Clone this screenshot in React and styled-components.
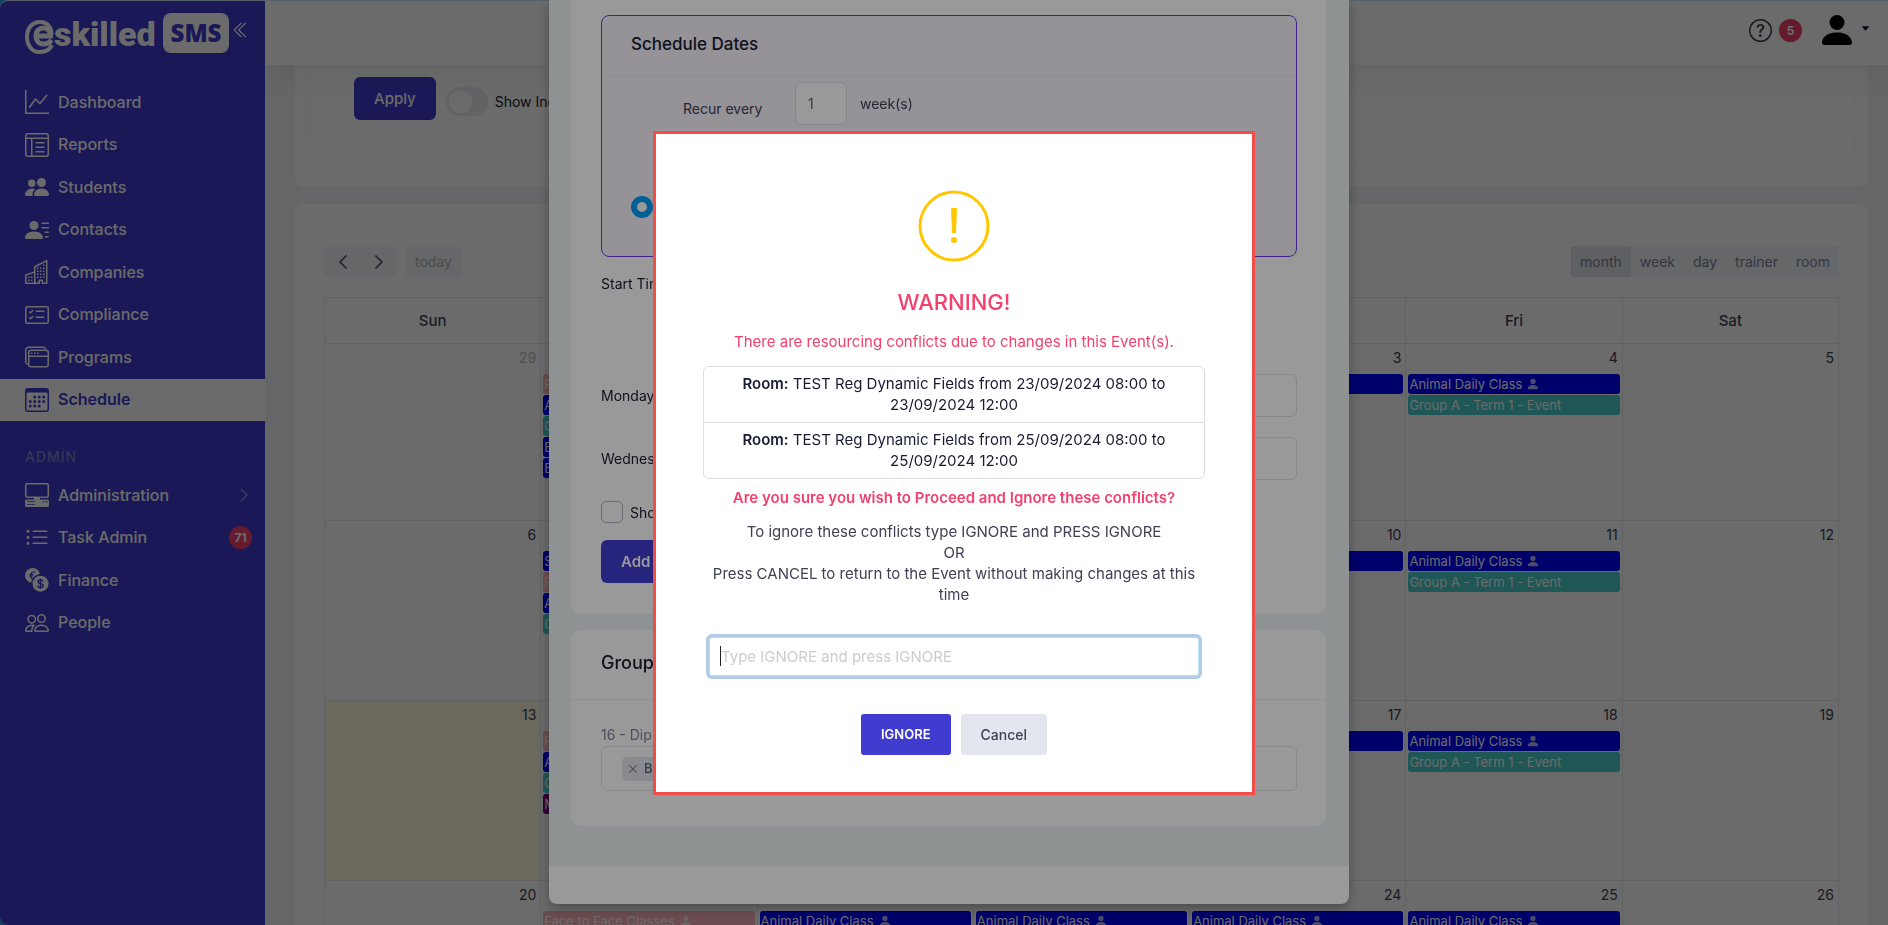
import React from "react";
import styled, { createGlobalStyle, css } from "styled-components";
import {
    BsGraphUp,
    BsPeopleFill,
    BsPersonLinesFill,
    BsCardChecklist,
    BsListUl,
    BsPeople,
    BsPersonFill,
    BsQuestionCircle,
    BsChevronRight,
    BsChevronLeft,
    BsChevronDoubleLeft,
    BsX,
    BsCaretDownFill,
} from "react-icons/bs";

const GlobalStyle = createGlobalStyle`
    * {
        box-sizing: border-box;
    }
    body {
        margin: 0;
        overflow: hidden;
        background: #1ca5e8;
        color: #181c32;
        font-family: Inter, "Open Sans", sans-serif;
        font-size: 14px;
        line-height: 21px;
    }
    button, input {
        font-family: inherit;
    }
    h2, h3, p, ul {
        margin: 0;
        padding: 0;
    }
    ul {
        list-style: none;
    }
`;

/* ---------- page shell ---------- */

const Shell = styled.div`
    display: flex;
    height: 100vh;
    overflow: hidden;
    border-top: 1px solid #cfe6fa;
    border-radius: 8px 0 0 8px;
    background: #f0f4f8;
`;

const Sidebar = styled.aside`
    flex: 0 0 265px;
    padding-top: 12px;
    background: #403ccf;
    color: #fff;
`;

const Brand = styled.div`
    display: flex;
    align-items: flex-start;
    height: 68px;
    padding-left: 25px;
`;

const LogoWord = styled.span`
    display: flex;
    align-items: center;
    width: 138px;
    height: 42px;
    font-family: Roboto, sans-serif;
    font-size: 34px;
    font-weight: 900;
    line-height: 42px;

    svg {
        flex: none;
        align-self: flex-end;
    }
`;

const LogoBadge = styled.span`
    width: 66px;
    height: 40px;
    border-radius: 8px;
    background: #fff;
    color: #403ccf;
    font-family: "Open Sans", sans-serif;
    font-size: 24px;
    font-weight: 800;
    line-height: 40px;
    text-align: center;
`;

const CollapseButton = styled.button`
    margin: 8px 0 0 3px;
    padding: 0;
    border: 0;
    background: none;
    color: #fff;
    font-size: 18px;
    line-height: 18px;

    svg {
        display: block;
    }
`;

const NavList = styled.ul`
    display: grid;
    grid-auto-rows: 1fr;
    min-height: ${({ $rows }) => ($rows * 85) / 2}px;
`;

const NavLink = styled.a`
    display: flex;
    align-items: center;
    gap: 9px;
    height: 100%;
    padding: 0 13px 0 25px;
    color: #fff;
    font-size: 16px;
    font-weight: 500;
    text-decoration: none;

    svg {
        flex: none;
        width: 24px;
        height: 24px;
    }

    ${({ $active }) =>
        $active &&
        css`
            background: #fff;
            color: #403ccf;
            font-weight: 600;
        `}
`;

const NavText = styled.span`
    flex: 1;
`;

const NavHeading = styled.h3`
    padding: 25px 25px 6px;
    color: #8280cf;
    font-size: 14px;
    font-weight: 500;
    line-height: 22px;
    letter-spacing: 1px;
`;

const NavArrow = styled(BsChevronRight)`
    && {
        width: 16px;
        height: 16px;
        opacity: 0.6;
    }
`;

const Badge = styled.span`
    min-width: 23px;
    height: 23px;
    border-radius: 12px;
    background: #f1416c;
    color: #fff;
    font-size: 12px;
    font-weight: 700;
    line-height: 23px;
    text-align: center;
`;

const Main = styled.main`
    flex: 1;
    min-width: 0;
`;

const TopBar = styled.header`
    position: relative;
    display: flex;
    align-items: flex-start;
    justify-content: flex-end;
    height: 64px;
    padding: 14px 18px 0 0;
    background: #fff;
    box-shadow: 0 10px 30px rgba(82, 63, 105, 0.08);

    ${Badge} {
        margin: 4px 20px 0 7px;
    }
`;

const HelpIcon = styled(BsQuestionCircle)`
    width: 23px;
    height: 23px;
    margin-top: 4px;
    color: #3f4254;
`;

const UserIcon = styled(BsPersonFill)`
    width: 40px;
    height: 40px;
    margin: -5px -5px 0;
    color: #000;
`;

const UserCaret = styled(BsCaretDownFill)`
    width: 9px;
    height: 9px;
    margin: 9px 0 0 9px;
`;

const Content = styled.div`
    padding: 0 20px 0 30px;
`;

const FilterCard = styled.section`
    height: 122px;
    margin-bottom: 17px;
    padding: 0 16px 24px;
    border-radius: 0 0 8px 8px;
    background: #fff;
`;

const FilterInner = styled.div`
    display: flex;
    align-items: flex-start;
    height: 98px;
    padding: 12px 43px 0;
    border-radius: 0 0 8px 8px;
    box-shadow: 0 0 20px rgba(76, 87, 125, 0.02);
`;

const PrimaryButton = styled.button`
    height: 43px;
    padding: 0 20px;
    border: 0;
    border-radius: 6px;
    background: #403ccf;
    color: #fff;
    font-size: 15px;
    font-weight: ${({ $strong }) => ($strong ? 600 : 500)};
`;

const Switch = styled.input`
    appearance: none;
    width: 42px;
    height: 29px;
    margin: 10px 7px 0 10px;
    border-radius: 15px;
    background: #e9edf2;

    &::before {
        content: "";
        display: block;
        width: 23px;
        height: 23px;
        margin: 3px;
        border-radius: 50%;
        background: #fff;
    }
`;

const SwitchLabel = styled.label`
    margin-top: 14px;
`;

/* ---------- calendar ---------- */

const CalendarCard = styled.section`
    padding: 42px 29px 30px;
    border-radius: 8px;
    background: #fff;
`;

const CalendarToolbar = styled.div`
    display: flex;
    gap: 10px;
    margin-bottom: 20px;
`;

const ButtonGroup = styled.div`
    display: flex;
    border-radius: 4px;
    overflow: hidden;
    background: #f0f3fa;

    &:last-child {
        margin-left: auto;
    }
`;

const ToolButton = styled.button`
    height: 31px;
    padding: 0 9px;
    border: 0;
    background: ${({ $active }) => ($active ? "#e4e7ee" : "#f3f6fa")};
    color: #7e8299;
    font-size: 14px;

    &:disabled {
        color: #b5b5c3;
    }

    svg {
        display: block;
        width: 16px;
        height: 16px;
        margin: 0 2px;
        stroke-width: 1;
        color: #5e6278;
    }
`;

const ArrowButton = styled(ToolButton)`
    width: 36px;
`;

const CalendarTable = styled.table`
    width: 100%;
    table-layout: fixed;
    border-collapse: collapse;

    th,
    td {
        padding: 0;
        border: 1px solid #e8eaf0;
    }

    th {
        height: 46px;
        color: #3f4254;
        font-size: 15px;
        font-weight: 500;
    }

    td {
        height: 180px;
        vertical-align: top;
    }

    tbody tr:first-child td {
        height: 177px;
    }
`;

const DayCell = styled.td`
    background: ${({ $today }) => ($today ? "#fffadf" : "transparent")};
`;

const DayNumber = styled.div`
    height: 30px;
    padding: 3px 4px 0;
    color: #3f4254;
    text-align: right;
    opacity: ${({ $muted }) => ($muted ? 0.35 : 1)};
`;

const eventColors = {
    blue: "#0000ff",
    teal: "#48d1cc",
    pink: "#ffb6c1",
    purple: "#800080",
};

const EventChip = styled.div`
    display: flex;
    align-items: center;
    gap: 4px;
    height: 20px;
    margin: 0 2px 1px;
    padding: 0 1px;
    border-radius: 3px;
    background: ${({ $color }) => eventColors[$color]};
    color: #fff;
    font-size: 13px;
    line-height: 20px;
    white-space: nowrap;

    svg {
        width: 14px;
        height: 14px;
        opacity: 0.7;
    }
`;

/* ---------- event modal ---------- */

const Overlay = styled.div`
    position: fixed;
    inset: 0;
    display: flex;
    justify-content: center;
    align-items: ${({ $center }) => ($center ? "center" : "flex-start")};
    padding-left: ${({ $center }) => ($center ? 20 : 10)}px;
    background: rgba(0, 0, 0, ${({ $dim }) => $dim});
`;

const EventModal = styled.div`
    width: 800px;
    border-radius: 0 0 8px 8px;
    background: #fff;
    box-shadow: 0 4px 12px rgba(0, 0, 0, 0.3);
    overflow: hidden;
`;

const ModalBody = styled.div`
    padding: 0 23px 40px 22px;
    background: #eef3f5;
`;

const ModalFooter = styled.div`
    height: 38px;
`;

const ModalCard = styled.section`
    margin-bottom: 16px;
    padding: 15px 29px 31px 30px;
    border-radius: 0 0 10px 10px;
    background: #fff;

    & + & {
        margin-bottom: 0;
        padding: 0 0 35px;
        border-radius: 10px;
    }
`;

const ScheduleBox = styled.div`
    height: 242px;
    margin-bottom: 16px;
    border: 1px solid #7239ea;
    border-radius: 8px;
    background: #f8f3fd;
`;

const BoxTitle = styled.h3`
    height: 60px;
    padding: 0 29px;
    border-bottom: 1px solid #f1edf7;
    font-size: 17px;
    font-weight: 500;
    line-height: 57px;
`;

const RecurRow = styled.div`
    display: flex;
    align-items: center;
    padding: 6px 0 0 81px;
    color: #3f4254;
`;

const RecurLabel = styled.label`
    width: 112px;
    padding-top: 10px;
`;

const TextField = styled.input`
    width: ${({ $narrow }) => ($narrow ? "52px" : "100%")};
    height: 43px;
    padding: 0 12px;
    border: 1px solid #e1e3ea;
    border-radius: 6px;
    background: #fff;
    color: #5e6278;
    font-size: 14px;
`;

const WeekText = styled.span`
    padding-left: 13px;
`;

const RadioLabel = styled.label`
    display: flex;
    align-items: center;
    gap: 10px;
    padding: 71px 29px 0;
`;

const RadioInput = styled.input`
    appearance: none;
    width: 22px;
    height: 22px;
    margin: 0;
    border: 6px solid #009ef7;
    border-radius: 50%;
    background: #fff;
`;

const FieldCaption = styled.p`
    margin-bottom: 80px;
`;

const DayRow = styled.div`
    display: grid;
    grid-template-columns: 110px 1fr;
    align-items: center;
    margin-bottom: 20px;
`;

const CheckLabel = styled.label`
    display: flex;
    align-items: center;
    gap: 7px;
    margin: 21px 0 17px;
`;

const CheckInput = styled.input`
    appearance: none;
    width: 22px;
    height: 22px;
    margin: 0;
    border: 1px solid #b5b5c3;
    border-radius: 5px;
`;

const CardHeading = styled.h3`
    height: 70px;
    padding: 0 30px;
    border-bottom: 1px solid #eff2f5;
    font-size: 18px;
    font-weight: 500;
    line-height: 66px;
`;

const GroupBody = styled.div`
    padding: 24px 29px 0 30px;
    color: #7e8299;
`;

const TagBox = styled.div`
    display: flex;
    align-items: center;
    height: 45px;
    margin-top: 1px;
    padding: 0 20px;
    border: 1px solid #e1e3ea;
    border-radius: 6px;
`;

const Tag = styled.span`
    display: flex;
    align-items: center;
    gap: 2px;
    height: 24px;
    padding: 0 8px 0 2px;
    border-radius: 5px;
    background: #e4e6ef;
    color: #5e6278;
    font-size: 13px;
    font-weight: 500;

    svg {
        opacity: 0.7;
    }
`;

/* ---------- warning dialog ---------- */

const WarningDialog = styled.div`
    width: 602px;
    padding: 56px 47px 37px;
    border: 3px solid #f04e47;
    background: #fff;
    font-size: 15px;
    text-align: center;
`;

const WarningIcon = styled.svg`
    display: block;
    width: 72px;
    height: 72px;
    margin: 0 auto 24px;
`;

const WarningTitle = styled.h2`
    color: #f1416c;
    font-size: 22px;
    font-weight: 500;
    line-height: 32px;
`;

const WarningText = styled.p`
    padding: 13px 0 14px;
    color: #f1416c;
`;

const ConflictList = styled.ul`
    border: 1px solid #dcdde0;
    border-radius: 6px;
`;

const ConflictItem = styled.li`
    padding: 6px 30px 7px;

    & + & {
        border-top: 1px solid #dcdde0;
    }

    b {
        font-weight: 600;
    }
`;

const ConfirmText = styled.p`
    padding: 8px 0 13px;
    color: #f1416c;
    font-weight: 600;
`;

const HelpText = styled.p`
    color: #3f4254;
`;

const IgnoreField = styled.div`
    position: relative;
    margin: 32px 6px 38px;
`;

const IgnoreInput = styled.input`
    display: block;
    width: 100%;
    height: 39px;
    padding: 0 11px;
    border: 1px solid #b8dff0;
    border-radius: 3px;
    outline: 0;
    box-shadow: 0 0 0 3px #b1cce4;
    caret-color: transparent;
    font-size: 15px;

    &::placeholder {
        color: #ccc;
    }
`;

const Caret = styled.span`
    position: absolute;
    top: 9px;
    left: 11px;
    width: 1px;
    height: 20px;
    background: #222;
`;

const DialogActions = styled.div`
    display: flex;
    justify-content: center;
    gap: 10px;
`;

const DialogButton = styled.button`
    height: 41px;
    padding: 0 20px;
    border: 0;
    border-radius: 3px;
    background: ${({ $primary }) => ($primary ? "#403ccf" : "#e4e6ef")};
    color: ${({ $primary }) => ($primary ? "#fff" : "#3f4254")};
    font-size: ${({ $primary }) => ($primary ? 13 : 14)}px;
    font-weight: ${({ $primary }) => ($primary ? 600 : 500)};
`;

/* ---------- icons ---------- */

const ReportsIcon = () => (
    <svg viewBox='0 0 16 16' fill='none' stroke='currentColor'>
        <rect x='0.5' y='0.5' width='15' height='15' rx='1.5' />
        <path d='M0.5 3.5h15M4.5 3.5v12M7 6.5h6M7 9.5h6M7 12.5h6' />
    </svg>
);

const CompaniesIcon = () => (
    <svg viewBox='0 0 16 16' fill='currentColor'>
        <path
            fillRule='evenodd'
            d='M14.763.075A.5.5 0 0 1 15 .5v15a.5.5 0 0 1-.5.5h-3a.5.5 0 0 1-.5-.5V14h-1v1.5a.5.5 0 0 1-.5.5h-9a.5.5 0 0 1-.5-.5V10a.5.5 0 0 1 .342-.474L6 7.64V4.5a.5.5 0 0 1 .276-.447l8-4a.5.5 0 0 1 .487.022zM6 8.694 1 10.36V15h5V8.694zM7 15h2v-1.5a.5.5 0 0 1 .5-.5h2a.5.5 0 0 1 .5.5V15h2V1.309l-7 3.5V15z'
        />
        <path d='M2 11h1v1H2v-1zm2 0h1v1H4v-1zm-2 2h1v1H2v-1zm2 0h1v1H4v-1zm4-4h1v1H8V9zm2 0h1v1h-1V9zm-2 2h1v1H8v-1zm2 0h1v1h-1v-1zm2-2h1v1h-1V9zm0 2h1v1h-1v-1zM8 7h1v1H8V7zm2 0h1v1h-1V7zm2 0h1v1h-1V7zM8 5h1v1H8V5zm2 0h1v1h-1V5zm2 0h1v1h-1V5zm0-2h1v1h-1V3z' />
    </svg>
);

const ProgramsIcon = () => (
    <svg viewBox='0 0 16 16' fill='none' stroke='currentColor'>
        <rect x='2.5' y='3.5' width='13' height='11' rx='1.5' />
        <path d='M2.5 7.5h13M1.8 12.8A2 2 0 0 1 .5 11V3.5a2 2 0 0 1 2-2H12a2 2 0 0 1 1.8 1.2' />
        <path d='M4 5.5h1M6 5.5h1M8 5.5h1' />
    </svg>
);

const ScheduleIcon = () => (
    <svg viewBox='0 0 16 16' fill='currentColor'>
        <path d='M14 0H2a2 2 0 0 0-2 2v12a2 2 0 0 0 2 2h12a2 2 0 0 0 2-2V2a2 2 0 0 0-2-2zM1 3.857C1 3.384 1.448 3 2 3h12c.552 0 1 .384 1 .857v10.286c0 .473-.448.857-1 .857H2c-.552 0-1-.384-1-.857V3.857z' />
        <path d='M6.5 7a1 1 0 1 0 0-2 1 1 0 0 0 0 2zm3 0a1 1 0 1 0 0-2 1 1 0 0 0 0 2zm3 0a1 1 0 1 0 0-2 1 1 0 0 0 0 2zm-9 3a1 1 0 1 0 0-2 1 1 0 0 0 0 2zm3 0a1 1 0 1 0 0-2 1 1 0 0 0 0 2zm3 0a1 1 0 1 0 0-2 1 1 0 0 0 0 2zm3 0a1 1 0 1 0 0-2 1 1 0 0 0 0 2zm-9 3a1 1 0 1 0 0-2 1 1 0 0 0 0 2zm3 0a1 1 0 1 0 0-2 1 1 0 0 0 0 2zm3 0a1 1 0 1 0 0-2 1 1 0 0 0 0 2z' />
    </svg>
);

const ComputerIcon = () => (
    <svg viewBox='0 0 16 16' fill='currentColor'>
        <path
            fillRule='evenodd'
            d='M1.5 0A1.5 1.5 0 0 0 0 1.5v7A1.5 1.5 0 0 0 1.5 10H6v1H1a1 1 0 0 0-1 1v3a1 1 0 0 0 1 1h14a1 1 0 0 0 1-1v-3a1 1 0 0 0-1-1h-5v-1h4.5A1.5 1.5 0 0 0 16 8.5v-7A1.5 1.5 0 0 0 14.5 0h-13Zm0 1h13a.5.5 0 0 1 .5.5v7a.5.5 0 0 1-.5.5h-13a.5.5 0 0 1-.5-.5v-7a.5.5 0 0 1 .5-.5ZM12 12.5a.5.5 0 1 1 1 0 .5.5 0 0 1-1 0Zm2 0a.5.5 0 1 1 1 0 .5.5 0 0 1-1 0ZM1.5 12h5a.25.25 0 0 1 0 .5h-5a.25.25 0 0 1 0-.5ZM1 14.25a.25.25 0 0 1 .25-.25h5.5a.25.25 0 1 1 0 .5h-5.5a.25.25 0 0 1-.25-.25Z'
        />
    </svg>
);

const FinanceIcon = () => (
    <svg viewBox='0 0 24 24' fill='none'>
        <path
            fill='currentColor'
            d='M7.5 0a7.500 7.500 0 0 1 7.300 5.900 9.500 9.500 0 0 0-8.500 9A7.500 7.500 0 0 1 7.500 0z'
        />
        <circle cx='15.5' cy='15.7' r='8' fill='currentColor' />
        <path
            stroke='#403ccf'
            strokeWidth='1.2'
            d='M10 4.400c-2.700-1.200-4.200.4-4.200 3s1 3.300 2 3.400M4.500 6.600h4M4.500 8.200h3'
        />
        <path
            stroke='#403ccf'
            strokeWidth='1.4'
            d='M18 13.600c-.3-1.200-1.200-1.700-2.500-1.700-3.200 0-3.300 3.200 0 3.700 3.600.5 3.400 4 0 4-1.600 0-2.500-.7-2.700-2M15.500 10.600v10.200'
        />
    </svg>
);

// round mark with the tail that sweeps under the first letter
const LogoMark = () => (
    <svg width='29' height='35' viewBox='0 0 29 35' aria-hidden='true'>
        <path
            fill='none'
            stroke='#fff'
            strokeWidth='4'
            d='M26.5 15C27 7 22 2 15 2 7 2 2 8.500 2 17s5 15 12.500 15c6 0 10.500-3 12.500-7'
        />
        <path
            fill='none'
            stroke='#fff'
            strokeWidth='5'
            d='M11 16h14.500c0-5-3-8-7-8s-7.500 3-7.500 8 3 8 7.500 8c3.500 0 6-1 8-4'
        />
    </svg>
);

/* ---------- data ---------- */

const mainNav = [
    { label: "Dashboard", icon: BsGraphUp },
    { label: "Reports", icon: ReportsIcon },
    { label: "Students", icon: BsPeopleFill },
    { label: "Contacts", icon: BsPersonLinesFill },
    { label: "Companies", icon: CompaniesIcon },
    { label: "Compliance", icon: BsCardChecklist },
    { label: "Programs", icon: ProgramsIcon },
    { label: "Schedule", icon: ScheduleIcon, active: true },
];

const adminNav = [
    { label: "Administration", icon: ComputerIcon, arrow: true },
    { label: "Task Admin", icon: BsListUl, badge: 71 },
    { label: "Finance", icon: FinanceIcon },
    { label: "People", icon: BsPeople },
];

const weekDays = ["Sun", "Mon", "Tue", "Wed", "Thu", "Fri", "Sat"];

const animal = { title: "Animal Daily Class", color: "blue", person: true };
const groupA = { title: "Group A - Term 1 - Event", color: "teal" };
const faceToFace = { title: "Face to Face Classes", color: "pink", person: true };
const exam = { title: "Exam", color: "blue" };
const study = { title: "Study", color: "blue" };
const meeting = { title: "Meeting", color: "purple" };

const weeks = [
    [
        { day: 29, muted: true },
        { day: 30, muted: true, events: [faceToFace, animal, groupA, exam, exam] },
        { day: 1 },
        { day: 2 },
        { day: 3, events: [animal] },
        { day: 4, events: [animal, groupA] },
        { day: 5 },
    ],
    [
        { day: 6 },
        { day: 7, events: [study, faceToFace, animal, groupA] },
        { day: 8 },
        { day: 9 },
        { day: 10, events: [animal] },
        { day: 11, events: [animal, groupA] },
        { day: 12 },
    ],
    [
        { day: 13, today: true },
        { day: 14, events: [faceToFace, animal, groupA, meeting] },
        { day: 15 },
        { day: 16 },
        { day: 17, events: [animal] },
        { day: 18, events: [animal, groupA] },
        { day: 19 },
    ],
    [
        { day: 20 },
        { day: 21, events: [faceToFace] },
        { day: 22, events: [animal] },
        { day: 23, events: [animal] },
        { day: 24, events: [animal] },
        { day: 25, events: [animal] },
        { day: 26 },
    ],
];

const conflicts = [
    "TEST Reg Dynamic Fields from 23/09/2024 08:00 to 23/09/2024 12:00",
    "TEST Reg Dynamic Fields from 25/09/2024 08:00 to 25/09/2024 12:00",
];

/* ---------- components ---------- */

const Nav = ({ items }) => (
    <NavList $rows={items.length}>
        {items.map(({ label, icon: Icon, active, arrow, badge }) => (
            <li key={label}>
                <NavLink href='#' $active={active}>
                    <Icon />
                    <NavText>{label}</NavText>
                    {arrow && <NavArrow />}
                    {badge && <Badge>{badge}</Badge>}
                </NavLink>
            </li>
        ))}
    </NavList>
);

const Calendar = () => (
    <CalendarCard>
        <CalendarToolbar>
            <ButtonGroup>
                <ArrowButton aria-label='Previous'>
                    <BsChevronLeft />
                </ArrowButton>
                <ArrowButton aria-label='Next'>
                    <BsChevronRight />
                </ArrowButton>
            </ButtonGroup>
            <ButtonGroup>
                <ToolButton disabled>today</ToolButton>
            </ButtonGroup>
            <ButtonGroup>
                {["month", "week", "day", "trainer", "room"].map((view) => (
                    <ToolButton key={view} $active={view === "month"}>
                        {view}
                    </ToolButton>
                ))}
            </ButtonGroup>
        </CalendarToolbar>
        <CalendarTable>
            <thead>
                <tr>
                    {weekDays.map((name) => (
                        <th key={name}>{name}</th>
                    ))}
                </tr>
            </thead>
            <tbody>
                {weeks.map((week) => (
                    <tr key={week[0].day}>
                        {week.map(({ day, muted, today, events = [] }) => (
                            <DayCell key={day} $today={today}>
                                <DayNumber $muted={muted}>{day}</DayNumber>
                                {events.map((event, i) => (
                                    <EventChip key={i} $color={event.color}>
                                        {event.title}
                                        {event.person && <BsPersonFill />}
                                    </EventChip>
                                ))}
                            </DayCell>
                        ))}
                    </tr>
                ))}
            </tbody>
        </CalendarTable>
    </CalendarCard>
);

const EventForm = () => (
    <EventModal>
        <ModalBody>
            <ModalCard>
                <ScheduleBox>
                    <BoxTitle>Schedule Dates</BoxTitle>
                    <RecurRow>
                        <RecurLabel htmlFor='recur'>Recur every</RecurLabel>
                        <TextField id='recur' $narrow defaultValue='1' />
                        <WeekText>week(s)</WeekText>
                    </RecurRow>
                    <RadioLabel>
                        <RadioInput type='radio' name='range' />
                        End by
                    </RadioLabel>
                </ScheduleBox>
                <FieldCaption>Start Time</FieldCaption>
                <DayRow>
                    <label htmlFor='monday'>Monday</label>
                    <TextField id='monday' />
                </DayRow>
                <DayRow>
                    <label htmlFor='wednesday'>Wednesday</label>
                    <TextField id='wednesday' />
                </DayRow>
                <CheckLabel>
                    <CheckInput type='checkbox' />
                    Show
                </CheckLabel>
                <PrimaryButton $strong>Add Event</PrimaryButton>
            </ModalCard>
            <ModalCard>
                <CardHeading>Group</CardHeading>
                <GroupBody>
                    16 - Dip
                    <TagBox>
                        <Tag>
                            <BsX size={18} />
                            BSB
                        </Tag>
                    </TagBox>
                </GroupBody>
            </ModalCard>
        </ModalBody>
        <ModalFooter />
    </EventModal>
);

const Warning = () => (
    <WarningDialog role='dialog' aria-labelledby='warning-title'>
        <WarningIcon viewBox='0 0 72 72' aria-hidden='true'>
            <circle cx='36' cy='36' r='34' fill='none' stroke='#ffc700' strokeWidth='3' />
            <path fill='#ffc700' d='M33 18h6l-1 25h-4z' />
            <circle cx='36' cy='50' r='3' fill='#ffc700' />
        </WarningIcon>
        <WarningTitle id='warning-title'>WARNING!</WarningTitle>
        <WarningText>There are resourcing conflicts due to changes in this Event(s).</WarningText>
        <ConflictList>
            {conflicts.map((text) => (
                <ConflictItem key={text}>
                    <b>Room:</b> {text}
                </ConflictItem>
            ))}
        </ConflictList>
        <ConfirmText>Are you sure you wish to Proceed and Ignore these conflicts?</ConfirmText>
        <HelpText>
            To ignore these conflicts type IGNORE and PRESS IGNORE
            <br />
            OR
            <br />
            Press CANCEL to return to the Event without making changes at this time
        </HelpText>
        <IgnoreField>
            <IgnoreInput aria-label='Type IGNORE' placeholder='Type IGNORE and press IGNORE' />
            <Caret />
        </IgnoreField>
        <DialogActions>
            <DialogButton $primary>IGNORE</DialogButton>
            <DialogButton>Cancel</DialogButton>
        </DialogActions>
    </WarningDialog>
);

const App = () => {
    return (
        <>
            <GlobalStyle />
            <Shell>
                <Sidebar>
                    <Brand>
                        <LogoWord>
                            <LogoMark />
                            skilled
                        </LogoWord>
                        <LogoBadge>SMS</LogoBadge>
                        <CollapseButton aria-label='Collapse menu'>
                            <BsChevronDoubleLeft />
                        </CollapseButton>
                    </Brand>
                    <Nav items={mainNav} />
                    <NavHeading>ADMIN</NavHeading>
                    <Nav items={adminNav} />
                </Sidebar>
                <Main>
                    <TopBar>
                        <HelpIcon />
                        <Badge>5</Badge>
                        <UserIcon />
                        <UserCaret />
                    </TopBar>
                    <Content>
                        <FilterCard>
                            <FilterInner>
                                <PrimaryButton>Apply</PrimaryButton>
                                <Switch type='checkbox' id='incomplete' />
                                <SwitchLabel htmlFor='incomplete'>Show Incomplete</SwitchLabel>
                            </FilterInner>
                        </FilterCard>
                        <Calendar />
                    </Content>
                </Main>
            </Shell>
            <Overlay $dim={0.3}>
                <EventForm />
            </Overlay>
            <Overlay $dim={0.4} $center>
                <Warning />
            </Overlay>
        </>
    );
};

export default App;
